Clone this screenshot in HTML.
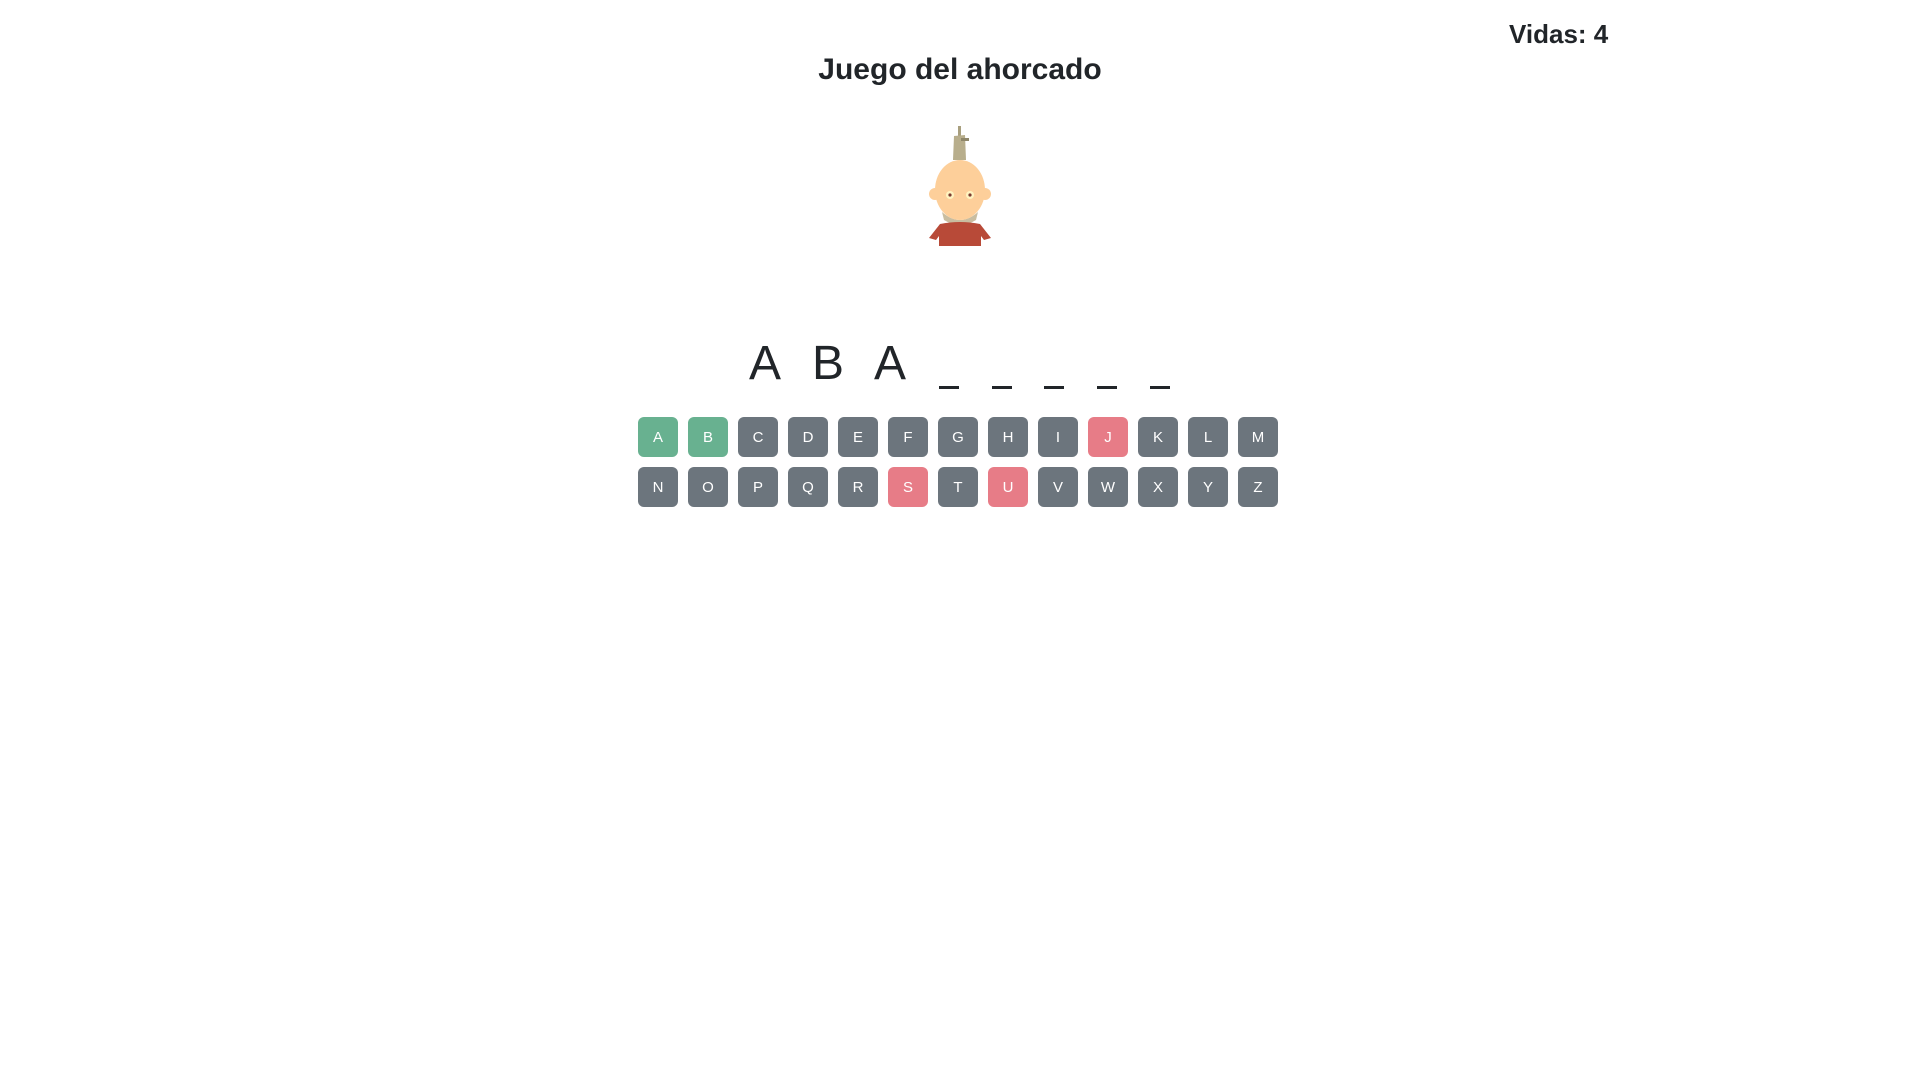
<!DOCTYPE html>
<html><head><meta charset="utf-8"><style>
body{margin:0;width:1920px;height:1080px;background:#fff;font-family:"Liberation Sans",sans-serif;color:#212529;position:relative;overflow:hidden}
.vidas{position:absolute;left:1509px;top:19px;font-size:26px;font-weight:bold}
h2{position:absolute;left:0;width:1920px;top:53px;margin:0;text-align:center;font-size:30px;font-weight:bold}
.ch{position:absolute;top:336px;font-size:48px;width:60px;text-align:center;transform:translateX(-30px)}
.u{position:absolute;top:386px;width:20px;height:3px;background:#212529;transform:translateX(-10px)}
.row{position:absolute;left:638px;display:flex;gap:10px}
.b{width:40px;height:40px;border-radius:6px;background:#6c757d;color:#fff;font-size:15px;display:flex;align-items:center;justify-content:center}
.g{background:#68b190}.r{background:#e77c87}
</style></head><body>
<div class="vidas">Vidas: 4</div>
<h2>Juego del ahorcado</h2>
<svg style="position:absolute;left:920px;top:120px" width="80" height="130" viewBox="0 0 80 130">
<rect x="38" y="6" width="3" height="12" fill="#a89f7e"/>
<path d="M34 16 L45 15 L46 40 L33 40 Z" fill="#b8ae8c"/>
<rect x="41" y="18" width="8" height="3" fill="#8f876a"/>
<circle cx="15" cy="74" r="6" fill="#fdcf9a"/><circle cx="65" cy="74" r="6" fill="#fdcf9a"/>
<path d="M22 92 Q40 108 58 92 L56 100 Q40 110 24 100Z" fill="#c9bda0"/>
<path d="M9 118 L20 104 Q40 100 60 104 L71 118 L64 120 L61 116 L61 126 L19 126 L19 116 L16 120Z" fill="#b84a38"/>
<ellipse cx="40" cy="70" rx="25" ry="30" fill="#fdcf9a"/>
<circle cx="30" cy="75" r="4" fill="#fff3c0"/><circle cx="30" cy="75" r="1.6" fill="#7a3a30"/>
<circle cx="50" cy="75" r="4" fill="#fff3c0"/><circle cx="50" cy="75" r="1.6" fill="#7a3a30"/>
</svg>
<div class="ch" style="left:765px">A</div>
<div class="ch" style="left:828px">B</div>
<div class="ch" style="left:890px">A</div>
<div class="u" style="left:949px"></div>
<div class="u" style="left:1002px"></div>
<div class="u" style="left:1054px"></div>
<div class="u" style="left:1107px"></div>
<div class="u" style="left:1160px"></div>
<div class="row" style="top:417px">
<div class="b g">A</div><div class="b g">B</div><div class="b">C</div><div class="b">D</div><div class="b">E</div><div class="b">F</div><div class="b">G</div><div class="b">H</div><div class="b">I</div><div class="b r">J</div><div class="b">K</div><div class="b">L</div><div class="b">M</div>
</div>
<div class="row" style="top:467px">
<div class="b">N</div><div class="b">O</div><div class="b">P</div><div class="b">Q</div><div class="b">R</div><div class="b r">S</div><div class="b">T</div><div class="b r">U</div><div class="b">V</div><div class="b">W</div><div class="b">X</div><div class="b">Y</div><div class="b">Z</div>
</div>
</body></html>
